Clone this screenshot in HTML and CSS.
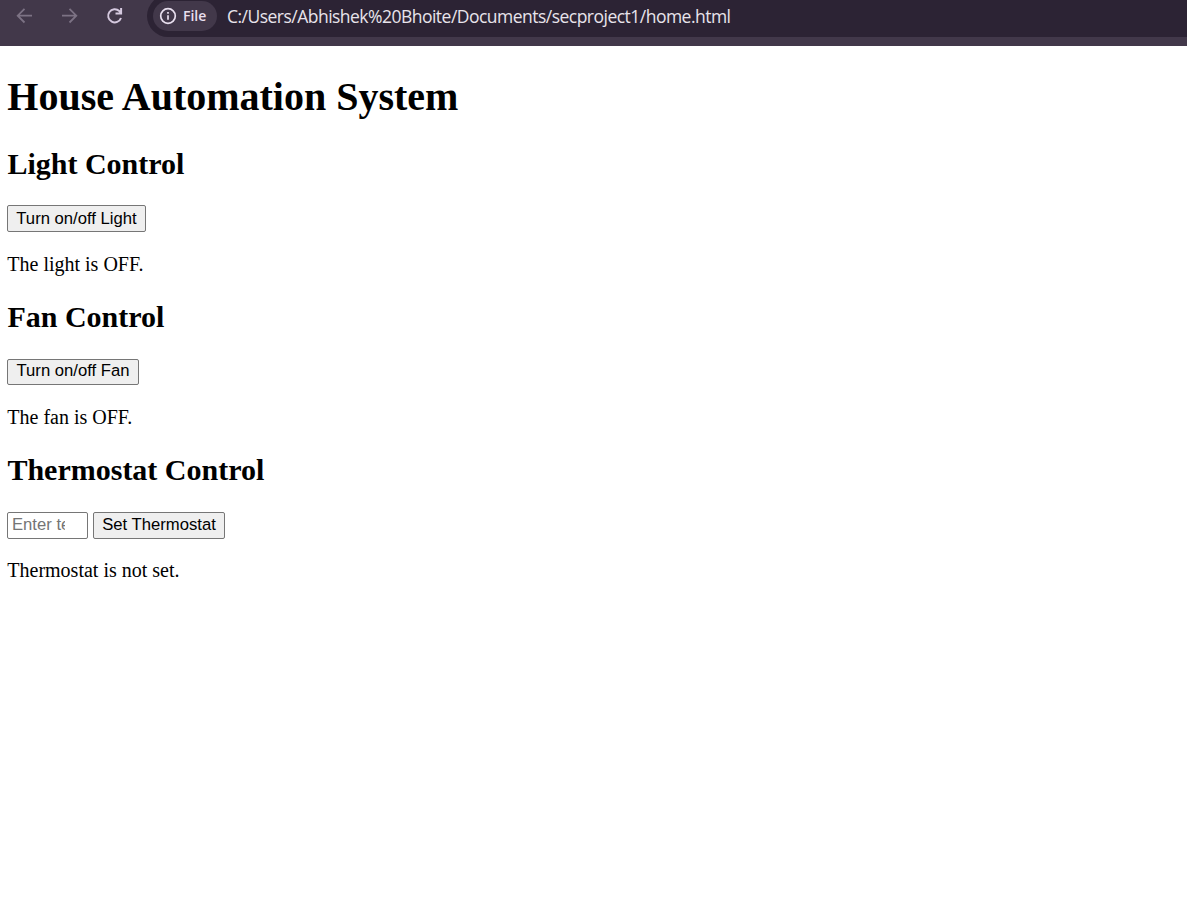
FILE: index.html
```html
<!DOCTYPE html>
<html lang="en">
<head>
<meta charset="utf-8">
<title>House Automation System</title>
<link rel="stylesheet" href="styles.css">
</head>
<body>
<header class="toolbar">
  <nav class="nav">
    <svg class="icon dim" viewBox="0 0 20 20"><path d="M17 9.700H3M9.500 2.900L2.700 9.700l6.800 6.800"/></svg>
    <svg class="icon dim" viewBox="0 0 20 20"><path d="M2 9.700h14M9.500 2.900l6.800 6.800-6.800 6.800"/></svg>
    <svg class="icon" viewBox="0 0 20 20"><path class="reload" d="M16 12A6.600 6.600 0 1 1 14.300 5L16 6.700M16.100 2V7.500H10.500"/></svg>
  </nav>
  <div class="address">
    <span class="chip">
      <svg class="info" viewBox="0 0 18 18"><circle cx="9" cy="9" r="7.300"/><path d="M9 8.200v4.600M9 5v1.800"/></svg>
      <span class="chip-label">File</span>
    </span>
    <span class="url">C:/Users/Abhishek%20Bhoite/Documents/secproject1/home.html</span>
  </div>
</header>
<main class="page">
  <h1 class="title">House Automation System</h1>
  <section>
    <h2 class="heading">Light Control</h2>
    <div class="controls"><button class="button light">Turn on/off Light</button></div>
    <p class="status">The light is OFF.</p>
  </section>
  <section>
    <h2 class="heading">Fan Control</h2>
    <div class="controls"><button class="button fan">Turn on/off Fan</button></div>
    <p class="status">The fan is OFF.</p>
  </section>
  <section>
    <h2 class="heading">Thermostat Control</h2>
    <div class="controls"><input class="temperature" type="number" placeholder="Enter temperature"><button class="button thermostat">Set Thermostat</button></div>
    <p class="status">Thermostat is not set.</p>
  </section>
</main>
</body>
</html>
```

FILE: styles.css
```css
* { box-sizing: border-box; }
body { margin: 0; background: #fff; color: #000; font-family: "Liberation Serif", "Times New Roman", serif; }
.toolbar { display: flex; height: 46px; background: #42384a; overflow: hidden; }
.nav { display: flex; gap: 25px; padding: 6px 0 0 15px; width: 147px; flex: none; }
.icon { width: 20px; height: 20px; flex: none; fill: none; stroke: #d5c9df; stroke-width: 1.8; }
.dim { stroke: #7c7284; }
.reload { stroke-width: 2; }
.address { display: flex; flex: 1; height: 42px; margin-top: -5px; padding: 6px 0 5px 6px; background: #2c2334; border-radius: 21px 0 0 21px; }
.chip { display: flex; align-items: center; width: 64px; height: 30px; padding-left: 6px; gap: 6px; border-radius: 15px; background: #42384a; flex: none; }
.info { width: 18px; height: 18px; fill: none; stroke: #e8dfee; stroke-width: 1.7; }
.chip-label { font: 600 14px/30px "Open Sans", sans-serif; color: #e8dfee; }
.url { margin-left: 10px; font: 17.5px/31px "Open Sans", sans-serif; letter-spacing: -0.52px; color: #e8e3eb; white-space: nowrap; }
.page { padding: 1px 7px; }
.title { margin: 27px 0 26.9px; padding-left: 0.3px; font-size: 40px; line-height: 46px; }
.heading { margin: 0 0 24.5px; padding-left: 0.4px; font-size: 30px; line-height: 34px; }
.controls { display: flex; gap: 5px; height: 27px; }
.button { height: 27px; padding: 0 0 0.4px; border: 1px solid #767676; border-radius: 2px; background: #efefef; color: #000; font: 16.67px "Liberation Sans", Arial, sans-serif; white-space: nowrap; }
.light { width: 139px; }
.fan { width: 132px; height: 26px; }
.thermostat { width: 132px; }
.temperature { width: 81px; height: 27px; padding: 0 22px 1px 4px; border: 1px solid #767676; border-radius: 2px; font: 16.67px "Liberation Sans", Arial, sans-serif; }
.temperature::placeholder { color: #757575; }
.temperature::-webkit-inner-spin-button { display: none; }
.status { margin: 20.4px 0 24.3px; padding-left: 0.3px; font-size: 20px; line-height: 23px; }
```
